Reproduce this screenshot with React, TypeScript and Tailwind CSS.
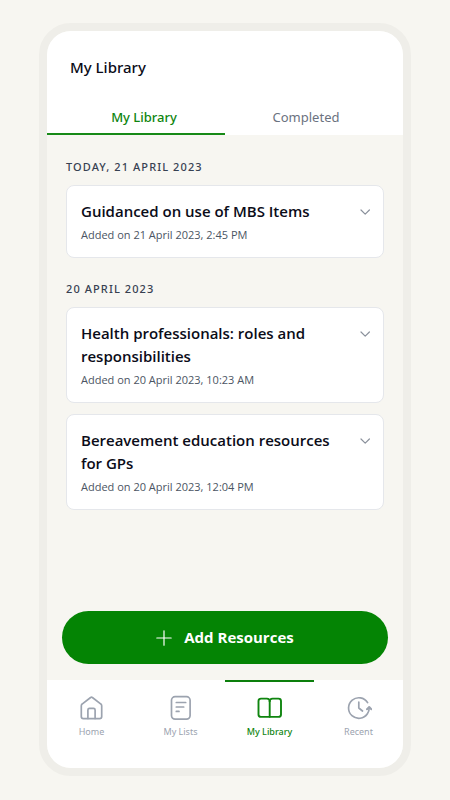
import { useState } from 'react'

interface Resource {
  id: number
  title: string
  added: string
}

interface Group {
  label: string
  items: Resource[]
}

const groups: Group[] = [
  {
    label: 'Today, 21 April 2023',
    items: [{ id: 1, title: 'Guidanced on use of MBS Items', added: '21 April 2023, 2:45 PM' }],
  },
  {
    label: '20 April 2023',
    items: [
      { id: 2, title: 'Health professionals: roles and responsibilities', added: '20 April 2023, 10:23 AM' },
      { id: 3, title: 'Bereavement education resources for GPs', added: '20 April 2023, 12:04 PM' },
    ],
  },
]

const tabs = ['My Library', 'Completed']

const iconProps = {
  width: 26,
  height: 26,
  viewBox: '0 0 26 26',
  fill: 'none',
  stroke: 'currentColor',
  strokeWidth: 1.7,
  strokeLinecap: 'round' as const,
  strokeLinejoin: 'round' as const,
  'aria-hidden': true,
}

const IconHome = () => (
  <svg {...iconProps}>
    <path d="M2.3 10.8c0-.9.4-1.500 1.100-2L11.600 2.500c.6-.5 1.200-.5 1.800 0l8.200 6.300c.7.5 1.100 1.100 1.100 2v10.700c0 1.300-.8 2.100-2.100 2.100H4.400c-1.300 0-2.100-.8-2.100-2.100z" />
    <path d="M8.900 23.400v-8.400c0-1 .6-1.600 1.600-1.600h4c1 0 1.600.6 1.600 1.600v8.400" />
  </svg>
)

const IconList = () => (
  <svg {...iconProps}>
    <rect x="3.500" y="1.700" width="18.600" height="22.400" rx="3.600" />
    <path d="M8.300 7.500h9.400M8.300 12h7.400M8.300 16.400h2.700" />
  </svg>
)

const IconBook = () => (
  <svg {...iconProps} strokeWidth={1.9}>
    <path d="M12.700 6.200c0-1.700-1.200-2.600-2.800-2.600H4c-1.500 0-2.500 1-2.500 2.500v13.400c0 1.500 1 2.400 2.500 2.400h17.500c1.500 0 2.500-.9 2.500-2.400V6.100c0-1.500-1-2.500-2.500-2.500h-5.900c-1.700 0-2.900.9-2.900 2.600z" />
    <path d="M12.700 6.200v15.500" />
  </svg>
)

const IconRecent = () => (
  <svg {...iconProps}>
    <path d="M21.600 7.600A10.300 10.300 0 1 0 21.400 18.800Q23.200 16.300 23.200 12.900" />
    <path d="M21 14.200l2.200-2.200 2.200 2.200" strokeWidth={2} />
    <path d="M12.800 7.200v5.800l3.700 3" />
  </svg>
)

const navItems = [
  { label: 'Home', icon: IconHome },
  { label: 'My Lists', icon: IconList },
  { label: 'My Library', icon: IconBook },
  { label: 'Recent', icon: IconRecent },
]

function ResourceCard({ item }: { item: Resource }) {
  const [open, setOpen] = useState(false)

  return (
    <li className="flex items-start gap-2 rounded-lg border border-[#e5e7eb] bg-white pt-3.5 pr-3 pb-[13px] pl-3.5">
      <div className="min-w-0 flex-1">
        <h3 className="text-[15px] leading-[23px] font-semibold text-[#0b0c18]">{item.title}</h3>
        <p className="mt-[3px] text-[11px] leading-[18px] text-[#4b5563]">Added on {item.added}</p>
      </div>
      <button
        type="button"
        aria-label={`Toggle ${item.title}`}
        aria-expanded={open}
        onClick={() => setOpen(!open)}
        className="flex h-[23px] w-4 shrink-0 items-center justify-end"
      >
        <svg
          width="12"
          height="12"
          viewBox="0 0 12 12"
          fill="none"
          stroke="#8b919c"
          strokeWidth="1.200"
          strokeLinecap="round"
          strokeLinejoin="round"
          className={open ? 'rotate-180' : ''}
        >
          <path d="M2 4l4.200 4.100L10.400 4" />
        </svg>
      </button>
    </li>
  )
}

export default function App() {
  const [tab, setTab] = useState('My Library')

  return (
    <div className="flex min-h-screen flex-col bg-[#f7f6f1] px-[39px] pt-[23px] pb-6 font-['Open_Sans',sans-serif]">
      <div className="flex flex-1 flex-col overflow-hidden rounded-[32px] border-8 border-[#efeee9] bg-[#f7f6f1]">
        {/* Header */}
        <header className="bg-white">
          <h1 className="px-[23px] pt-6 pb-6 font-['Noto_Sans',sans-serif] text-[15px] leading-6 font-medium text-[#0b0c18]">
            My Library
          </h1>
          <div role="tablist" className="grid grid-cols-2">
            {tabs.map(t => (
              <button
                key={t}
                type="button"
                role="tab"
                aria-selected={tab === t}
                onClick={() => setTab(t)}
                className={`border-b-2 pt-[5px] pb-[7px] font-['Noto_Sans',sans-serif] text-[13px] leading-[18px] ${
                  tab === t
                    ? 'border-[#178a17] pl-4 font-medium text-[#0f850f]'
                    : 'border-transparent pr-4 text-[#6b7280]'
                }`}
              >
                {t}
              </button>
            ))}
          </div>
        </header>

        {/* Resources */}
        <main className="flex-1 space-y-[23px] px-[19px] pt-6">
          {groups.map(group => (
            <section key={group.label}>
              <h2 className="mb-2.5 font-['Noto_Sans',sans-serif] text-[11px] leading-4 font-medium tracking-widest text-[#374151] uppercase">
                {group.label}
              </h2>
              <ul className="space-y-[11px]">
                {group.items.map(item => (
                  <ResourceCard key={item.id} item={item} />
                ))}
              </ul>
            </section>
          ))}
        </main>

        <div className="px-[15px] py-4">
          <button
            type="button"
            className="flex w-full items-center justify-center gap-3 rounded-full bg-[#048404] py-[15px] text-[15px] leading-[23px] font-bold text-white"
          >
            <svg width="16" height="16" viewBox="0 0 16 16" stroke="currentColor" strokeWidth="1.200" strokeLinecap="round" aria-hidden="true">
              <path d="M8 .8v14.400M.8 8h14.400" />
            </svg>
            Add Resources
          </button>
        </div>

        {/* Bottom nav */}
        <nav className="grid grid-cols-4 bg-white">
          {navItems.map(({ label, icon: Icon }) => {
            const active = label === 'My Library'
            return (
              <a
                key={label}
                href="#"
                aria-current={active ? 'page' : undefined}
                className={`flex flex-col items-center gap-[3px] border-t-2 pt-[13px] pb-7 font-['Noto_Sans',sans-serif] text-[9px] leading-4 ${
                  active ? 'border-[#0c7f0c] font-medium text-[#0f850f]' : 'border-transparent text-[#9ca3af]'
                }`}
              >
                <Icon />
                {label}
              </a>
            )
          })}
        </nav>
      </div>
    </div>
  )
}
